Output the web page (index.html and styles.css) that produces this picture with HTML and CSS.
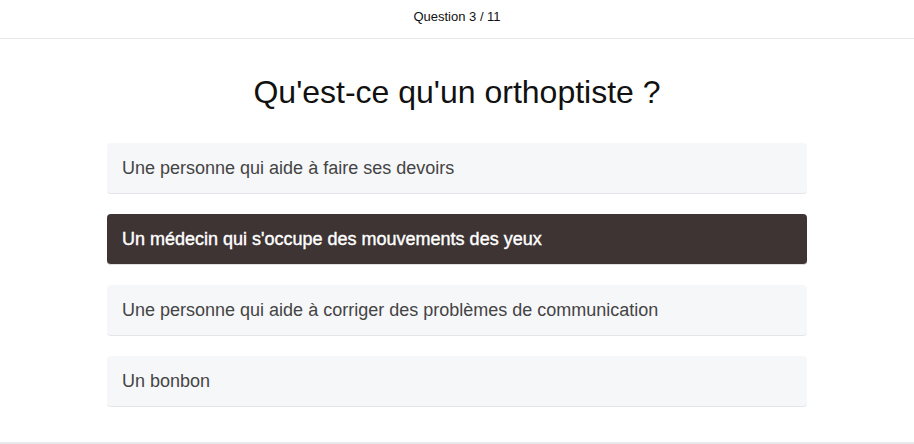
FILE: index.html
```html
<!DOCTYPE html>
<html lang="fr">
<head>
<meta charset="utf-8">
<title>Quiz</title>
<link rel="stylesheet" href="styles.css">
</head>
<body>
<header class="topbar">Question 3 / 11</header>
<main class="quiz">
  <h1 class="question">Qu'est-ce qu'un orthoptiste ?</h1>
  <ul class="answers">
    <li class="answer">Une personne qui aide à faire ses devoirs</li>
    <li class="answer selected">Un médecin qui s'occupe des mouvements des yeux</li>
    <li class="answer">Une personne qui aide à corriger des problèmes de communication</li>
    <li class="answer">Un bonbon</li>
  </ul>
</main>
<footer class="bottombar"></footer>
</body>
</html>
```
FILE: styles.css
```css
html, body {
  margin: 0;
  padding: 0;
  background: #fff;
  font-family: "Liberation Sans", Arial, sans-serif;
  color: #222;
}
.topbar {
  height: 28px;
  padding-top: 10px;
  text-align: center;
  font-size: 13px;
  line-height: 14px;
  color: #111;
  border-bottom: 1px solid #e6e6e6;
}
.quiz {
  display: flex;
  flex-direction: column;
  align-items: center;
  padding-top: 36px;
}
.question {
  margin: 0;
  font-size: 32px;
  font-weight: normal;
  line-height: 34px;
  color: #111;
}
.answers {
  list-style: none;
  margin: 34px 0 0;
  padding: 0;
  width: 700px;
  display: flex;
  flex-direction: column;
  gap: 20px;
}
.answer {
  height: 50px;
  display: flex;
  align-items: center;
  padding: 0 15px;
  background: #f6f7f9;
  border-radius: 4px;
  border-bottom: 1px solid #e4e5e8;
  font-size: 18px;
  color: #444;
}
.answer.selected {
  background: #3e3433;
  color: #fff;
  -webkit-text-stroke: 0.4px #fff;
  border-bottom-color: #e0e0e0;
}
.bottombar {
  margin-top: 35px;
  border-top: 2px solid #e8e9eb;
  height: 10px;
}
```
